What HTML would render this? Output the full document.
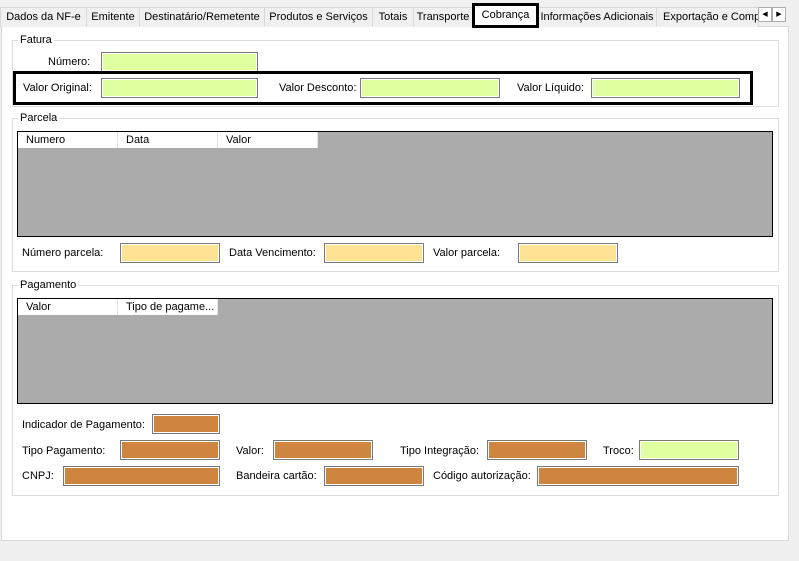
<!DOCTYPE html>
<html><head><meta charset="utf-8"><style>
*{box-sizing:border-box;margin:0;padding:0}
body{width:799px;height:561px;background:#f0f0f0;position:relative;overflow:hidden;font-family:"Liberation Sans",Arial,sans-serif;font-size:11px;color:#000;white-space:nowrap}
.a{position:absolute}
.tab{position:absolute;top:7px;height:20px;border:1px solid #d9d9d9;border-bottom:none;background:#f0f0f0;padding:3px 0 0 0;text-align:center;white-space:nowrap;overflow:hidden;font-size:11px}
.panel{position:absolute;left:1px;top:26px;width:788px;height:515px;background:#fff;border:1px solid #d9d9d9}
.grp{position:absolute;left:12px;width:767px;border:1px solid #dcdcdc}
.gl{position:absolute;background:#fff;padding:0 2px;left:5px;top:-8px;line-height:14px}
.in{position:absolute;height:20px;border:1px solid #7a7a7a;box-shadow:inset 0 0 0 1px #fff}
.g{background:#dfffa0}.y{background:#ffe394}.o{background:#cd8540}
.lb{position:absolute;line-height:14px}
.grid{position:absolute;left:17px;width:756px;height:106px;background:#ababab;border:1px solid #000}
.hd{position:absolute;top:0;height:16px;background:#fff;border-right:1px solid #e5e5e5;padding:1px 0 0 8px;line-height:14px;overflow:hidden}
</style></head><body>
<div class="panel"></div>
<div class="tab" style="left:0;width:87px">Dados da NF-e</div>
<div class="tab" style="left:86px;width:54px">Emitente</div>
<div class="tab" style="left:139px;width:126px">Destinatário/Remetente</div>
<div class="tab" style="left:264px;width:109px">Produtos e Serviços</div>
<div class="tab" style="left:372px;width:42px">Totais</div>
<div class="tab" style="left:413px;width:60px">Transporte</div>
<div class="tab" style="left:537px;width:120px">Informações Adicionais</div>
<div class="tab" style="left:656px;width:103px;text-align:left;padding-left:6px">Exportação e Compras</div>
<div class="a" style="left:472px;top:3px;width:67px;height:25px;background:#fff;border:3px solid #000;text-align:center;padding-top:3px">Cobrança</div>
<div class="a" style="left:758px;top:7px;width:14px;height:15px;border:1px solid #adadad;background:#fff;font-size:7px;text-align:center;line-height:13px">◀</div>
<div class="a" style="left:772px;top:7px;width:14px;height:15px;border:1px solid #adadad;background:#fff;font-size:7px;text-align:center;line-height:13px">▶</div>

<div class="grp" style="top:40px;height:67px"><span class="gl">Fatura</span></div>
<span class="lb" style="left:48px;top:55px">Número:</span>
<div class="in g" style="left:101px;top:52px;width:157px"></div>
<div class="a" style="left:13px;top:71px;width:740px;height:34px;border:3px solid #000"></div>
<span class="lb" style="left:23px;top:81px">Valor Original:</span>
<div class="in g" style="left:101px;top:78px;width:157px"></div>
<span class="lb" style="left:279px;top:81px">Valor Desconto:</span>
<div class="in g" style="left:360px;top:78px;width:140px"></div>
<span class="lb" style="left:517px;top:81px">Valor Líquido:</span>
<div class="in g" style="left:591px;top:78px;width:149px"></div>

<div class="grp" style="top:118px;height:154px"><span class="gl">Parcela</span></div>
<div class="grid" style="top:131px">
<div class="hd" style="left:0;width:100px">Numero</div>
<div class="hd" style="left:100px;width:100px">Data</div>
<div class="hd" style="left:200px;width:100px">Valor</div>
</div>
<span class="lb" style="left:22px;top:246px">Número parcela:</span>
<div class="in y" style="left:120px;top:243px;width:100px"></div>
<span class="lb" style="left:229px;top:246px">Data Vencimento:</span>
<div class="in y" style="left:324px;top:243px;width:100px"></div>
<span class="lb" style="left:433px;top:246px">Valor parcela:</span>
<div class="in y" style="left:518px;top:243px;width:100px"></div>

<div class="grp" style="top:285px;height:211px"><span class="gl">Pagamento</span></div>
<div class="grid" style="top:298px">
<div class="hd" style="left:0;width:100px">Valor</div>
<div class="hd" style="left:100px;width:100px">Tipo de pagame...</div>
</div>
<span class="lb" style="left:22px;top:418px">Indicador de Pagamento:</span>
<div class="in o" style="left:152px;top:414px;width:68px"></div>
<span class="lb" style="left:22px;top:444px">Tipo Pagamento:</span>
<div class="in o" style="left:120px;top:440px;width:100px"></div>
<span class="lb" style="left:236px;top:444px">Valor:</span>
<div class="in o" style="left:273px;top:440px;width:100px"></div>
<span class="lb" style="left:400px;top:444px">Tipo Integração:</span>
<div class="in o" style="left:487px;top:440px;width:100px"></div>
<span class="lb" style="left:603px;top:444px">Troco:</span>
<div class="in g" style="left:639px;top:440px;width:100px"></div>
<span class="lb" style="left:22px;top:469px">CNPJ:</span>
<div class="in o" style="left:63px;top:466px;width:157px"></div>
<span class="lb" style="left:236px;top:469px">Bandeira cartão:</span>
<div class="in o" style="left:324px;top:466px;width:100px"></div>
<span class="lb" style="left:433px;top:469px">Código autorização:</span>
<div class="in o" style="left:537px;top:466px;width:202px"></div>
</body></html>
